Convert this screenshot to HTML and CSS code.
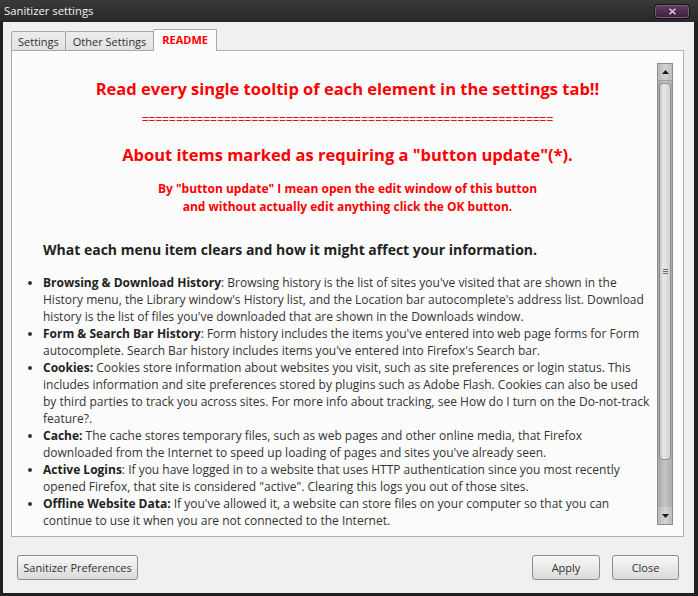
FILE: index.html
```html
<!DOCTYPE html>
<html>
<head>
<meta charset="utf-8">
<title>Sanitizer settings</title>
<link rel="stylesheet" href="styles.css">
</head>
<body>
<div class="window">
  <div class="titlebar">
    <span class="title">Sanitizer settings</span>
    <span class="close-btn"><svg width="9" height="7" viewBox="0 0 9 7"><path d="M1.5 0.8 L7.5 6.2 M7.5 0.8 L1.5 6.2" stroke="#d9d2d9" stroke-width="1.5" fill="none"/></svg></span>
  </div>
  <div class="client">
    <div class="tabs">
      <div class="tab">Settings</div>
      <div class="tab">Other Settings</div>
      <div class="tab active">README</div>
    </div>
    <div class="panel">
      <div class="viewport">
        <div class="doc">
          <p class="h1">Read every single tooltip of each element in the settings tab!!</p>
          <p class="eq">============================================================</p>
          <p class="h2">About items marked as requiring a "button update"(*).</p>
          <p class="sub">By "button update" I mean open the edit window of this button<br>and without actually edit anything click the OK button.</p>
          <p class="h3">What each menu item clears and how it might affect your information.</p>
          <ul class="items">
            <li><b>Browsing &amp; Download History</b>: Browsing history is the list of sites you've visited that are shown in the History menu, the Library window's History list, and the Location bar autocomplete's address list. Download history is the list of files you've downloaded that are shown in the Downloads window.</li>
            <li><b>Form &amp; Search Bar History</b>: Form history includes the items you've entered into web page forms for Form autocomplete. Search Bar history includes items you've entered into Firefox's Search bar.</li>
            <li><b>Cookies:</b> Cookies store information about websites you visit, such as site preferences or login status. This includes information and site preferences stored by plugins such as Adobe Flash. Cookies can also be used by third parties to track you across sites. For more info about tracking, see How do I turn on the Do-not-track feature?.</li>
            <li><b>Cache:</b> The cache stores temporary files, such as web pages and other online media, that Firefox downloaded from the Internet to speed up loading of pages and sites you've already seen.</li>
            <li><b>Active Logins</b>: If you have logged in to a website that uses HTTP authentication since you most recently opened Firefox, that site is considered "active". Clearing this logs you out of those sites.</li>
            <li><b>Offline Website Data:</b> If you've allowed it, a website can store files on your computer so that you can continue to use it when you are not connected to the Internet.</li>
            <li><b>Site Preferences:</b> Site-specific preferences, such as saved zoom levels and permissions.</li>
          </ul>
        </div>
      </div>
      <div class="scrollbar">
        <div class="sb-btn sb-up"><svg width="7" height="4" viewBox="0 0 7 4"><path d="M0 4 L3.5 0 L7 4 Z" fill="#1a1a1a"/></svg></div>
        <div class="sb-thumb"><svg width="5" height="5" viewBox="0 0 5 5"><path d="M0 0.5 H5 M0 2.5 H5 M0 4.5 H5" stroke="#6a6a6a" stroke-width="1"/></svg></div>
        <div class="sb-track"></div>
        <div class="sb-btn sb-down"><svg width="7" height="4" viewBox="0 0 7 4"><path d="M0 0 L3.5 4 L7 0 Z" fill="#1a1a1a"/></svg></div>
      </div>
    </div>
    <div class="footer">
      <button class="btn btn-prefs">Sanitizer Preferences</button>
      <button class="btn btn-apply">Apply</button>
      <button class="btn btn-close">Close</button>
    </div>
  </div>
</div>
</body>
</html>
```

FILE: styles.css
```css
* { box-sizing: border-box; }
html, body { margin: 0; padding: 0; }
body {
  width: 698px;
  height: 596px;
  overflow: hidden;
  background: #1f1f1f;
  font-family: "Open Sans", "DejaVu Sans", sans-serif;
}
.window {
  width: 698px;
  height: 596px;
  display: flex;
  flex-direction: column;
  background: #212121;
}
.titlebar {
  height: 22px;
  flex: none;
  display: flex;
  align-items: center;
  justify-content: space-between;
  padding: 0 9px 0 4px;
  background: linear-gradient(#3a3a3a, #272727);
}
.title {
  color: #f2f2f2;
  font-size: 11.3px;
  line-height: 16px;
}
.close-btn {
  width: 34px;
  height: 13px;
  display: flex;
  align-items: center;
  justify-content: center;
  border: 1px solid #7d5d7b;
  border-radius: 3px;
  background: linear-gradient(#5f3b5c, #3d2240);
  box-shadow: 0 0 0 1px #151515;
}
.client {
  flex: 1;
  min-height: 0;
  margin: 0 4px 3px 3px;
  background: #f0f0f0;
  display: flex;
  flex-direction: column;
  padding: 7px 10px 13px 8px;
}
.tabs {
  height: 22px;
  flex: none;
  display: flex;
  align-items: flex-end;
  margin-bottom: -1px;
  position: relative;
  z-index: 1;
}
.tab {
  height: 20px;
  padding: 0 6px;
  display: flex;
  align-items: center;
  font-size: 11px;
  color: #303030;
  border: 1px solid #a8a8a8;
  border-radius: 2px 2px 0 0;
  background: linear-gradient(#ececec, #e2e2e2);
}
.tab + .tab { margin-left: -1px; }
.tab:nth-child(2) { padding: 0 7px; }
.tab.active {
  height: 22px;
  padding: 0 8px 2px;
  border-bottom: none;
  background: #fcfcfc;
  color: #ff0000;
  font-weight: 700;
}
.panel {
  flex: 1;
  min-height: 0;
  display: grid;
  grid-template-columns: 1fr;
  grid-template-rows: 1fr;
  border: 1px solid #b1b1b1;
  background: #fcfcfc;
}
.viewport {
  grid-area: 1 / 1;
  overflow: hidden;
  margin-bottom: 9px;
  min-height: 0;
}
.doc {
  padding: 27px 31px 0;
}
.doc p { margin: 0; }
.h1, .h2 {
  font-size: 16.5px;
  line-height: 22px;
  font-weight: 700;
  color: #ff0000;
  text-align: center;
}
.eq {
  margin-top: 12px !important;
  font-size: 12px;
  line-height: 16px;
  color: #ff0000;
  text-align: center;
}
.h2 { margin-top: 16px !important; }
.sub {
  margin-top: 14px !important;
  font-size: 12px;
  line-height: 18px;
  font-weight: 700;
  color: #ff0000;
  text-align: center;
}
.h3 {
  margin-top: 24px !important;
  font-size: 14px;
  line-height: 20px;
  font-weight: 700;
  color: #222;
}
.items {
  margin: 14px 0 0;
  padding: 0;
  list-style: disc outside;
  font-size: 12px;
  line-height: 17px;
  color: #333;
}
.items b { color: #222; }
.scrollbar {
  grid-area: 1 / 1;
  justify-self: end;
  width: 16px;
  margin: 12px 10px 11px 0;
  display: flex;
  flex-direction: column;
  border: 1px solid #8e8e8e;
  background: linear-gradient(to right, #a7a7a7, #c6c6c6 50%, #ababab);
}
.sb-btn {
  height: 17px;
  flex: none;
  display: flex;
  align-items: center;
  justify-content: center;
  background: linear-gradient(to right, #b9b9b9, #d4d4d4 50%, #bcbcbc);
}
.sb-up { border-bottom: 1px solid #a0a0a0; }
.sb-thumb {
  height: 377px;
  flex: none;
  margin: 2px 1px 0;
  border: 1px solid #8c8c8c;
  border-radius: 4px;
  background: linear-gradient(to right, #c9c9c9, #e8e8e8 35%, #d2d2d2);
  display: flex;
  align-items: center;
  justify-content: center;
}
.sb-track { flex: 1; }
.footer {
  flex: none;
  display: flex;
  gap: 12px;
  margin-top: 18px;
  padding: 0 5px 0 6px;
}
.btn {
  height: 25px;
  padding: 0;
  font-family: "Open Sans", "DejaVu Sans", sans-serif;
  font-size: 11px;
  color: #333;
  border: 1px solid #8d8d8d;
  border-radius: 3px;
  background: linear-gradient(#f8f8f8, #dadada);
}
.btn-prefs { width: 121px; margin-right: auto; }
.btn-apply { width: 68px; }
.btn-close { width: 67px; }
```
